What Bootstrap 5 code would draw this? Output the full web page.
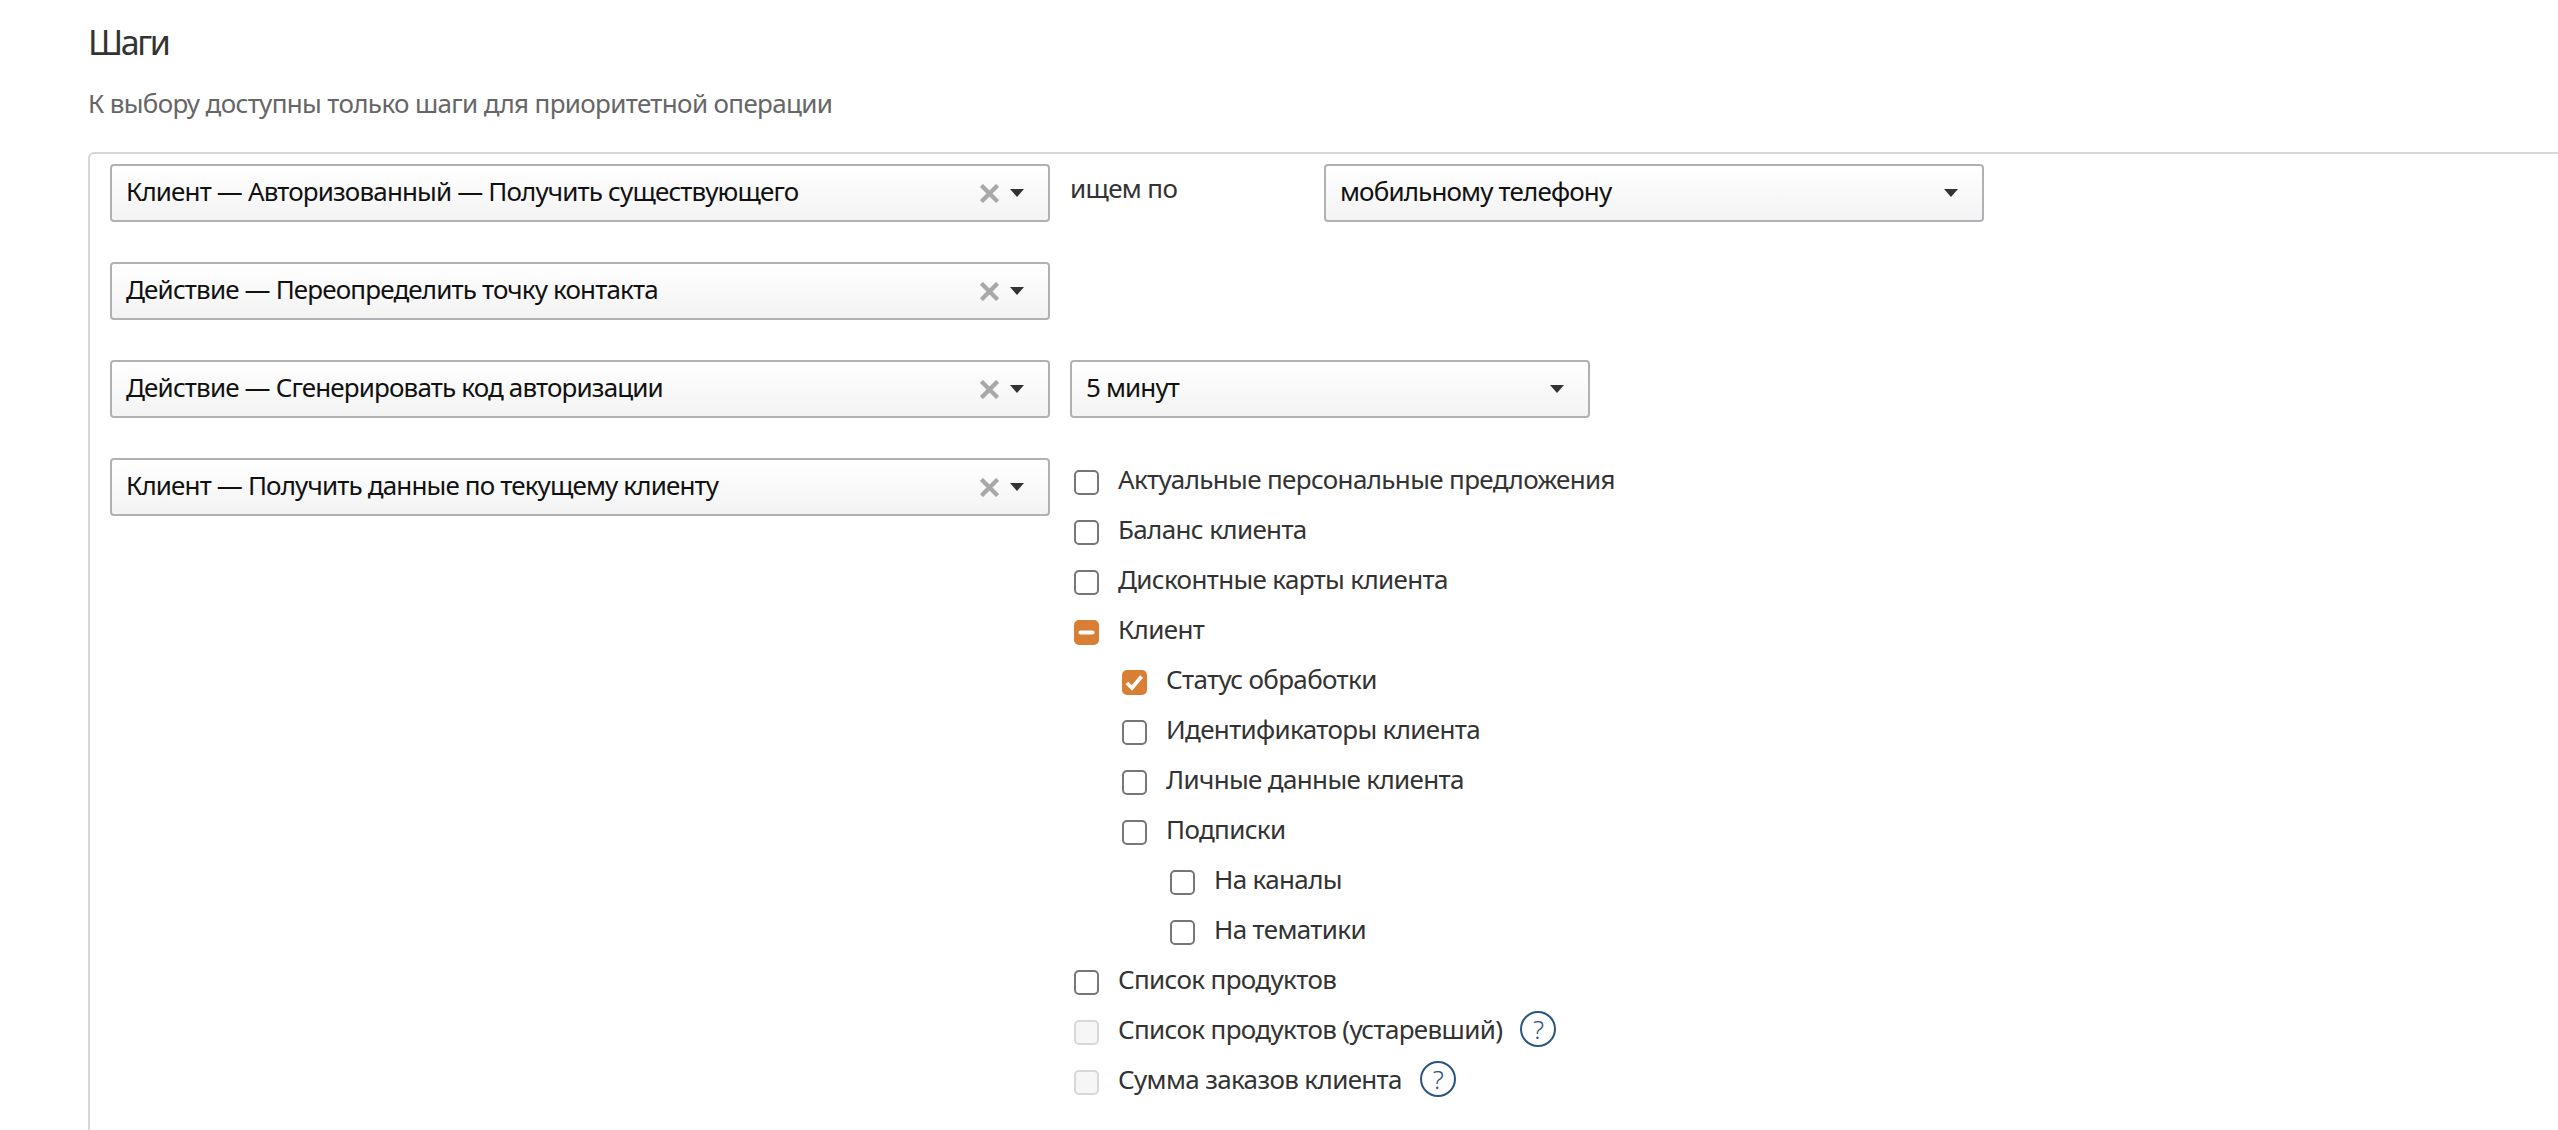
<!DOCTYPE html>
<html lang="ru">

<head>
  <meta charset="UTF-8" />
  <title>Шаги</title>
  <link rel="stylesheet" href="https://cdn.jsdelivr.net/npm/bootstrap@5.3.2/dist/css/bootstrap.min.css" />
  <style>
    html, body { height: 100%; }
    body {
      font-family: "Noto Sans", "Open Sans", sans-serif;
      font-size: 26px;
      letter-spacing: -0.65px;
      color: #333;
      overflow: hidden;
    }

    .steps-page {
      height: 100%;
      padding: 20px 0 0 88px;
      display: flex;
      flex-direction: column;
    }

    .steps-title { font-size: 34px; font-weight: 400; line-height: 44px; margin: 0; color: #333; letter-spacing: -2.4px; }
    .steps-hint { font-size: 26px; line-height: 36px; color: #666; margin: 21px 0 31px; }

    .steps-panel {
      flex: 1;
      border: 2px solid #d6d6d6;
      border-right: 0;
      border-bottom: 0;
      border-top-left-radius: 6px;
      padding: 10px 0 0 20px;
    }

    .step-row { display: flex; margin-bottom: 40px; }

    .pick {
      display: flex;
      align-items: center;
      height: 58px;
      padding: 0 14px 3px;
      border: 2px solid #b1b1b5;
      border-radius: 4px;
      background: linear-gradient(#fff, #f3f3f3);
      color: #111;
      font-size: 26px;
      letter-spacing: -0.85px;
      text-align: left;
      flex-shrink: 0;
    }
    .pick:hover, .pick:active { border-color: #b1b1b5; color: #111; }
    .pick-main { width: 940px; margin-right: 20px; }
    .pick-by { width: 660px; }
    .pick-time { width: 520px; }
    .pick-text { flex: 1; white-space: nowrap; }
    .pick-clear { width: 19px; height: 19px; margin: 3px 11px 0 0; }
    .pick-caret {
      width: 0;
      height: 0;
      margin: 3px 10px 0 0;
      border-left: 7px solid transparent;
      border-right: 7px solid transparent;
      border-top: 8px solid #333;
    }

    .by-label { width: 254px; line-height: 48px; flex-shrink: 0; }

    .tree-list { padding-top: 2px; }
    .tree-item { display: flex; align-items: flex-start; height: 50px; margin: 0; padding: 0 0 0 4px; line-height: 39px; color: #333; }
    .tree-l2 { padding-left: 52px; }
    .tree-l3 { padding-left: 100px; }

    .tree-item .form-check-input {
      width: 25px;
      height: 25px;
      margin: 10px 19px 0 0;
      flex-shrink: 0;
      border: 2px solid #767676;
      border-radius: 5px;
      background-size: 100% 100%;
      float: none;
    }
    .tree-item .form-check-input:checked {
      background-color: #d97f35;
      border-color: #d97f35;
      background-image: url("data:image/svg+xml,%3Csvg xmlns='http://www.w3.org/2000/svg' viewBox='0 0 21 21'%3E%3Cpath d='M3 11l5 5 9.5-11.5' fill='none' stroke='%23fff' stroke-width='3.8'/%3E%3C/svg%3E");
    }
    .tree-item .form-check-input:indeterminate {
      background-color: #d97f35;
      border-color: #d97f35;
      background-image: url("data:image/svg+xml,%3Csvg xmlns='http://www.w3.org/2000/svg' viewBox='0 0 21 21'%3E%3Cpath d='M4.5 10.5h12' fill='none' stroke='%23fff' stroke-width='4' stroke-linecap='round'/%3E%3C/svg%3E");
    }
    .tree-item .form-check-input:disabled {
      opacity: 1;
      background-color: #f6f6f6;
      border-color: #d8d8d8;
    }

    .help-mark {
      display: inline-flex;
      align-items: center;
      justify-content: center;
      width: 36px;
      height: 36px;
      margin: 1px 0 0 18px;
      border: 2px solid #2a5583;
      border-radius: 50%;
      color: #2a5583;
      font-size: 26px;
      font-weight: 300;
      line-height: 1;
      flex-shrink: 0;
    }
  </style>
</head>

<body>
  <div class="steps-page">
    <h2 class="steps-title">Шаги</h2>
    <p class="steps-hint">К выбору доступны только шаги для приоритетной операции</p>

    <div class="steps-panel">
      <div class="step-row">
        <button type="button" class="btn pick pick-main">
          <span class="pick-text">Клиент — Авторизованный — Получить существующего</span>
          <svg class="pick-clear" viewBox="0 0 20 20"><path d="M1.5 1.5l17 17M18.5 1.5l-17 17" stroke="#a8a8a8" stroke-width="4.5" fill="none"/></svg>
          <span class="pick-caret"></span>
        </button>
        <div class="by-label">ищем по</div>
        <button type="button" class="btn pick pick-by">
          <span class="pick-text">мобильному телефону</span>
          <span class="pick-caret"></span>
        </button>
      </div>

      <div class="step-row">
        <button type="button" class="btn pick pick-main">
          <span class="pick-text">Действие — Переопределить точку контакта</span>
          <svg class="pick-clear" viewBox="0 0 20 20"><path d="M1.5 1.5l17 17M18.5 1.5l-17 17" stroke="#a8a8a8" stroke-width="4.5" fill="none"/></svg>
          <span class="pick-caret"></span>
        </button>
      </div>

      <div class="step-row">
        <button type="button" class="btn pick pick-main">
          <span class="pick-text">Действие — Сгенерировать код авторизации</span>
          <svg class="pick-clear" viewBox="0 0 20 20"><path d="M1.5 1.5l17 17M18.5 1.5l-17 17" stroke="#a8a8a8" stroke-width="4.5" fill="none"/></svg>
          <span class="pick-caret"></span>
        </button>
        <button type="button" class="btn pick pick-time">
          <span class="pick-text">5 минут</span>
          <span class="pick-caret"></span>
        </button>
      </div>

      <div class="step-row">
        <button type="button" class="btn pick pick-main">
          <span class="pick-text">Клиент — Получить данные по текущему клиенту</span>
          <svg class="pick-clear" viewBox="0 0 20 20"><path d="M1.5 1.5l17 17M18.5 1.5l-17 17" stroke="#a8a8a8" stroke-width="4.5" fill="none"/></svg>
          <span class="pick-caret"></span>
        </button>
        <div class="tree-list">
          <label class="tree-item"><input class="form-check-input" type="checkbox" />Актуальные персональные предложения</label>
          <label class="tree-item"><input class="form-check-input" type="checkbox" />Баланс клиента</label>
          <label class="tree-item"><input class="form-check-input" type="checkbox" />Дисконтные карты клиента</label>
          <label class="tree-item"><input class="form-check-input" type="checkbox" id="clientAll" />Клиент</label>
          <label class="tree-item tree-l2"><input class="form-check-input" type="checkbox" checked />Статус обработки</label>
          <label class="tree-item tree-l2"><input class="form-check-input" type="checkbox" />Идентификаторы клиента</label>
          <label class="tree-item tree-l2"><input class="form-check-input" type="checkbox" />Личные данные клиента</label>
          <label class="tree-item tree-l2"><input class="form-check-input" type="checkbox" />Подписки</label>
          <label class="tree-item tree-l3"><input class="form-check-input" type="checkbox" />На каналы</label>
          <label class="tree-item tree-l3"><input class="form-check-input" type="checkbox" />На тематики</label>
          <label class="tree-item"><input class="form-check-input" type="checkbox" />Список продуктов</label>
          <label class="tree-item"><input class="form-check-input" type="checkbox" disabled />Список продуктов (устаревший)<span class="help-mark">?</span></label>
          <label class="tree-item"><input class="form-check-input" type="checkbox" disabled />Сумма заказов клиента<span class="help-mark">?</span></label>
        </div>
      </div>
    </div>
  </div>

  <script src="https://cdn.jsdelivr.net/npm/bootstrap@5.3.2/dist/js/bootstrap.bundle.min.js"></script>
  <script>
    document.getElementById("clientAll").indeterminate = true;
  </script>
</body>

</html>
